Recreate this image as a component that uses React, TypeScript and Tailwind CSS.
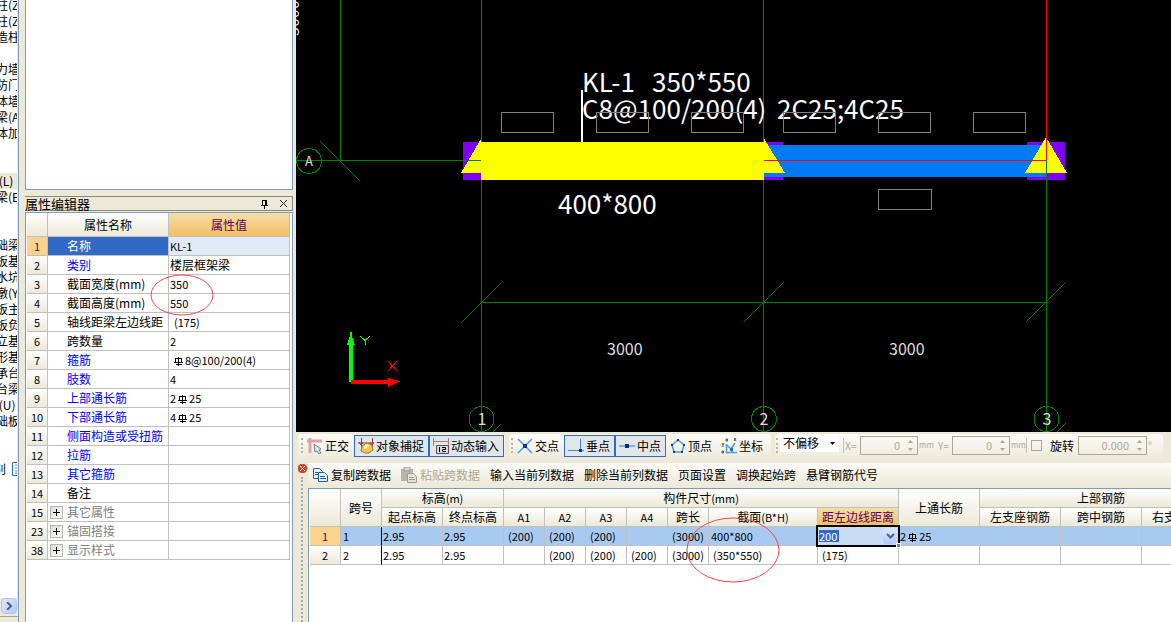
import type { ReactNode } from 'react'

interface Property {
  no: number
  name: string
  value?: ReactNode
  tone?: 'link' | 'group'
}

interface NumberBoxProps {
  label: string
  value: string
  wide?: boolean
}

// HRB rebar grade mark, stands between the count and the diameter
function Rebar() {
  return (
    <svg viewBox="0 0 9 9" className="mx-0.5 inline-block size-[9px] align-[-1px]" fill="none" stroke="currentColor" shapeRendering="crispEdges">
      <path d="M4.500 0v9M1 1.500h7M1.500 2v4M7.500 2v4M0 5.500h9M2 7.500h6" />
    </svg>
  )
}

const treeItems = [
  '柱(Z', '柱(Z', '造柱', '', '力墙', '防门', '体墙', '梁(A', '体加', '', '', ' (L)', '梁(E', '', '',
  '础梁', '板基', '水坑', '墩(Y', '板主', '板负', '立基', '形基', '承台', '台梁', ' (U)', '础板', '', '',
]

const properties: Property[] = [
  { no: 1, name: '名称', value: 'KL-1' },
  { no: 2, name: '类别', value: <span className="text-xs">楼层框架梁</span>, tone: 'link' },
  { no: 3, name: '截面宽度(mm)', value: '350' },
  { no: 4, name: '截面高度(mm)', value: '550' },
  { no: 5, name: '轴线距梁左边线距', value: <span className="pl-1">(175)</span> },
  { no: 6, name: '跨数量', value: '2' },
  { no: 7, name: '箍筋', value: <span className="pl-0.5"><Rebar />8@100/200(4)</span>, tone: 'link' },
  { no: 8, name: '肢数', value: '4', tone: 'link' },
  { no: 9, name: '上部通长筋', value: <>2<Rebar />25</>, tone: 'link' },
  { no: 10, name: '下部通长筋', value: <>4<Rebar />25</>, tone: 'link' },
  { no: 11, name: '侧面构造或受扭筋', tone: 'link' },
  { no: 12, name: '拉筋', tone: 'link' },
  { no: 13, name: '其它箍筋', tone: 'link' },
  { no: 14, name: '备注' },
  { no: 15, name: '其它属性', tone: 'group' },
  { no: 23, name: '锚固搭接', tone: 'group' },
  { no: 38, name: '显示样式', tone: 'group' },
]

const spanColumns = [
  'w-[31px]', 'w-[41px]', 'w-[61px]', 'w-[61px]', 'w-[41px]', 'w-[41px]', 'w-[41px]', 'w-[41px]',
  'w-[41px]', 'w-[109px]', 'w-[81px]', 'w-[81px]', 'w-[81px]', 'w-[81px]', 'w-[81px]',
]

const headCell = 'h-[19px] overflow-hidden whitespace-nowrap border-b border-r border-[#c0c0c0] bg-linear-to-b from-white to-[#ece9d8] p-0 text-center font-normal'
const bodyCell = 'h-[19px] whitespace-nowrap border-b border-r border-[#c0c0c0] p-0'

function TreeStrip() {
  return (
    <div className="flex w-[19px] shrink-0 flex-col overflow-hidden border-r border-[#7f9db9] bg-[#ece9d8]">
      <div className="mr-px flex-1 overflow-hidden bg-white">
        <ul className="-mt-[3px]">
          {treeItems.map((item, i) => (
            <li key={i} className={`h-4 whitespace-pre pl-0 leading-4 ${item === ' (L)' ? 'bg-[#ece9d8]' : ''}`}>
              <span className="-ml-1">{item}</span>
            </li>
          ))}
          <li className="flex h-4 items-center whitespace-pre leading-4">
            <span className="-ml-1.5 w-[18px] shrink-0">别</span>
            <svg viewBox="0 0 16 16" className="size-4 shrink-0">
              <path d="M.5 1.5h15v13H.5z" fill="#fff" stroke="#2a6ac8" />
              <path d="M3 4h9M3 7h9M3 10h9M3 12h9" stroke="#4aa0f0" />
            </svg>
          </li>
        </ul>
      </div>
      <button aria-label="向右滚动" className="mx-px flex h-4 w-4 items-center justify-center rounded-sm border border-[#b0c4f0] bg-linear-to-br from-[#e0e8ff] to-[#b4c8f6]">
        <svg viewBox="0 0 8 8" className="size-2">
          <path d="M2 0l4 4-4 4" fill="none" stroke="#4d6185" strokeWidth="2" />
        </svg>
      </button>
      <div className="mt-0.5 h-1.5 border-t border-[#aca899]" />
    </div>
  )
}

function PropertyEditor() {
  const nameColor = (p: Property) => {
    if (p.no === 1) return 'bg-[#316ac5] text-white'
    if (p.tone === 'link') return 'text-[#0000ff]'
    if (p.tone === 'group') return 'text-[#808080]'
    return ''
  }

  return (
    <section className="flex min-h-0 flex-1 flex-col">
      <div className="mt-1.5 mb-px flex h-[15px] items-center border border-l-0 border-[#8a887c]">
        <h2 className="flex-1 text-[13px] leading-none">属性编辑器</h2>
        <button aria-label="固定" className="mr-2.5">
          <svg viewBox="0 0 9 10" className="h-[10px] w-[9px]" fill="none" stroke="#000" shapeRendering="crispEdges">
            <path d="M2.5 6V1.5h4V6M5.5 1v5M1 6.500h7M4.500 6v4" />
          </svg>
        </button>
        <button aria-label="关闭" className="mr-1">
          <svg viewBox="0 0 9 9" className="size-[9px]" fill="none" stroke="#222">
            <path d="M1 1l7 7M8 1L1 8" />
          </svg>
        </button>
      </div>
      <div className="relative min-h-0 flex-1 overflow-hidden border border-b-0 border-[#7f9db9] bg-white pl-px">
        <table className="w-[263px] table-fixed border-separate border-spacing-0 leading-[18px]">
          <colgroup>
            <col className="w-[21px]" />
            <col className="w-[121px]" />
            <col className="w-[121px]" />
          </colgroup>
          <thead>
            <tr className="h-6">
              <th className={headCell} />
              <th className={headCell}>属性名称</th>
              <th className="border-b border-r border-[#c0c0c0] bg-linear-to-b from-[#f9dca8] to-[#f0bf62] p-0 font-normal text-[#580058]">属性值</th>
            </tr>
          </thead>
          <tbody>
            {properties.map(p => (
              <tr key={p.no}>
                <th scope="row" className={p.no === 1 ? `${bodyCell} bg-[#fcd38e] text-[11px] font-normal text-[#580058]` : `${headCell} text-[11px]`}>
                  {p.no}
                </th>
                <td className={`${bodyCell} ${nameColor(p)}`}>
                  <div className="flex h-[18px] items-center">
                    <span className="flex w-[19px] shrink-0 pl-0.5">
                      {p.tone === 'group' && (
                        <button aria-label={`展开${p.name}`} className="flex size-[13px] items-center justify-center border border-[#b8b8b0] bg-linear-to-br from-[#dcdcd4] to-white">
                          <svg viewBox="0 0 7 7" className="size-[7px]" stroke="#000" shapeRendering="crispEdges">
                            <path d="M0 3.5h7M3.5 0v7" />
                          </svg>
                        </button>
                      )}
                    </span>
                    {p.name}
                  </div>
                </td>
                <td className={`${bodyCell} pl-px text-[11px] ${p.no === 1 ? 'bg-[#e0eaf6]' : ''}`}>{p.value}</td>
              </tr>
            ))}
          </tbody>
        </table>
        <svg viewBox="0 0 64 42" className="pointer-events-none absolute left-[124px] top-[61px] h-[42px] w-16" fill="none">
          <ellipse cx="32" cy="21" rx="31" ry="20" stroke="#f04848" />
        </svg>
      </div>
    </section>
  )
}

function Drawing() {
  return (
    <div className="h-[432px] overflow-hidden bg-black">
      <svg viewBox="296 0 875 432" className="h-[432px] w-[875px]" fill="none" shapeRendering="crispEdges">
        {/* grid axes */}
        <g stroke="#008000">
          <path d="M340.5 0v160M296 160.5h168M320 141l40 40" />
          <path d="M481.5 180v252M763.5 180v252M1046.5 160v272" />
          <path d="M481 302.5h565M461 323l40-40M744 322l40-40M1026 322l40-40" />
          <circle cx="309" cy="161" r="12.5" />
          <circle cx="481.5" cy="419" r="12.5" />
          <circle cx="764" cy="419" r="12.5" />
          <circle cx="1046.5" cy="419" r="12.5" />
          <path d="M493 432l8-8M1057 432l9-9" />
        </g>

        {/* supports and the two spans */}
        <path d="M463 142h18v38h-18zM764 142h19v38h-19zM1027 142h38v38h-38z" fill="#8000f5" />
        <path d="M764 145h282v32H764z" fill="#007af5" />
        <path d="M481 142h283v38H481z" fill="#ff0" />
        <path d="M482 137l-21 36h22zM763 137l22 36h-22zM1046 137l-21 36h42z" fill="#ff0" />
        <path d="M463 160.500h18M1046.500 160v20" stroke="#008000" />
        <path d="M481.5 0v142M763.5 0v142M1046.5 0v160M764 160.5h282" stroke="#f00" />

        <path d="M582 90v52" stroke="#fff" strokeWidth="2" />
        <g fill="#fff" fontSize="26">
          <text x="582" y="92">KL-1 <tspan x="652">350*550</tspan></text>
          <text x="582" y="119">C8@100/200(4) <tspan x="777">2C25;4C25</tspan></text>
          <text x="558" y="214">400*800</text>
        </g>
        <g fill="#ddd" fontSize="16">
          <text x="607" y="355">3000</text>
          <text x="889" y="355">3000</text>
          <text x="0" y="0" transform="translate(299 36) rotate(-90)">3000</text>
          <text x="309" y="166" textAnchor="middle" fontSize="13">A</text>
          <text x="482" y="425" textAnchor="middle">1</text>
          <text x="764" y="425" textAnchor="middle">2</text>
          <text x="1047" y="425" textAnchor="middle">3</text>
        </g>
        <g stroke="#808080">
          {[501, 596, 691, 783, 878, 973].map(x => (
            <rect key={x} x={x + 0.5} y="112.5" width="52" height="20" />
          ))}
          <rect x="878.5" y="189.5" width="53" height="20" />
        </g>

        {/* coordinate marker */}
        <path d="M349 382v-37h-2l3-9v-4h2v4l3 9h-2v37z" fill="#0f0" />
        <path d="M360 336l5 4.500M370 336l-5 4.500V345" stroke="#0f0" />
        <path d="M351 380h37v-2l8 2 4 1v1l-4 1-8 4v-3h-37z" fill="#f00" />
        <path d="M388 361l9 10M397 361l-9 10" stroke="#f00" />
      </svg>
    </div>
  )
}

function Grip() {
  return <span className="h-[15px] shrink-0 border-l-2 border-dotted border-[#b8b5a6]" />
}

function SnapButton({ label, icon, pressed }: { label: string; icon: ReactNode; pressed?: boolean }) {
  return (
    <button
      aria-pressed={!!pressed}
      className={`flex h-[22px] shrink-0 items-center gap-0.5 whitespace-nowrap border pl-[3px] pr-1 ${
        pressed ? 'border-[#316ac5] bg-[#e1e6e8]' : 'border-transparent'
      }`}
    >
      <svg viewBox="0 0 16 16" className="size-4 shrink-0" fill="none">{icon}</svg>
      {label}
    </button>
  )
}

function NumberBox({ label, value, wide }: NumberBoxProps) {
  return (
    <div className={`flex h-[19px] shrink-0 border border-[#aca899] ${wide ? 'w-[69px]' : 'w-[58px]'}`}>
      <input aria-label={label} disabled defaultValue={value} className="min-w-0 flex-1 bg-transparent text-right text-[11px] text-[#aca899]" />
      <div className="flex w-[17px] flex-col items-center justify-around pl-1">
        <button aria-label={`${label} 增加`} disabled className="h-2 leading-none">
          <svg viewBox="0 0 5 3" className="h-[3px] w-[5px]"><path d="M0 3h5L2.500 0z" fill="#aca899" /></svg>
        </button>
        <button aria-label={`${label} 减少`} disabled className="h-2 leading-none">
          <svg viewBox="0 0 5 3" className="h-[3px] w-[5px]"><path d="M0 0h5L2.500 3z" fill="#aca899" /></svg>
        </button>
      </div>
    </div>
  )
}

const barStyle = 'flex h-[27px] shrink-0 items-center rounded bg-linear-to-b from-[#fcfbf8] via-[#f4f2e9] to-[#ece9d8] pb-1'

function SnapToolbar() {
  return (
    <div className="flex gap-1 overflow-hidden pl-0.5 pt-0.5">
      <div className={`${barStyle} w-[207px] pl-[3px]`}>
        <Grip />
        <SnapButton
          label="正交"
          icon={
            <>
              <path d="M0 3h15M3 0v15" stroke="#dfa3a6" strokeWidth="3" />
              <path d="M7 6l7 5-2 1 2 3-2 1-2-3-2 1z" fill="#dce6f2" stroke="#6f7f95" />
            </>
          }
        />
        <div className="flex">
          <SnapButton
            pressed
            label="对象捕捉"
            icon={
              <>
                <path d="M3.500 0v10M14.500 0v10M0 5h16M1 4l2 3 2-3M12 4l2 3 2-3" stroke="#8c3a48" />
                <path d="M4 8l5-3 5 2 1 5-4 3H7l-4-2z" fill="#ecc458" stroke="#a87a20" />
                <path d="M7 7l4 1M6 10l3-1" stroke="#fff3b8" strokeWidth="2" />
              </>
            }
          />
          <SnapButton
            pressed
            label="动态输入"
            icon={
              <>
                <path d="M.5 0v8M15.500 0v8M1 3.500h14" stroke="#b27780" />
                <path d="M3.500 7.500h12v8h-12z" fill="#d8d8dc" stroke="#505058" />
                <path d="M6.500 9v5M9 9.500h3.500v2H9.500v2H13" stroke="#000" />
              </>
            }
          />
        </div>
      </div>

      <div className={`${barStyle} w-[262px] pl-[2px]`}>
        <Grip />
        <SnapButton
          label="交点"
          icon={
            <>
              <path d="M1 1l14 14M15 1L1 15" stroke="#4a9ae8" strokeWidth="1.500" />
              <path d="M6 6h4v4H6z" fill="#0a3c8c" />
            </>
          }
        />
        <div className="flex">
          <SnapButton
            pressed
            label="垂点"
            icon={
              <>
                <path d="M0 12.500h16M12.500 1v11" stroke="#3f8ad8" />
                <path d="M11 11h3v3h-3z" fill="#0a3c8c" />
              </>
            }
          />
          <SnapButton
            pressed
            label="中点"
            icon={
              <>
                <path d="M0 8h16" stroke="#5a9ee0" strokeWidth="1.500" />
                <path d="M6 6h4v4H6z" fill="#0a2c7c" />
              </>
            }
          />
        </div>
        <SnapButton
          label="顶点"
          icon={
            <>
              <path d="M8 2l6 5-2 7H4L2 7z" stroke="#4a9ae8" strokeWidth="1.500" />
              <path d="M7 1h2v2H7zM13 6h2v2h-2zM11 13h2v2h-2zM3 13h2v2H3zM1 6h2v2H1z" fill="#14407c" />
            </>
          }
        />
        <SnapButton
          label="坐标"
          icon={
            <>
              <path d="M5.500 6v8.500H16M6 7l4 4 4-6M11 11v3" stroke="#4a9ae8" strokeWidth="1.500" />
              <path d="M1 5l1 2 1-2M2 7v2M13 0l2 3M15 0l-2 3" stroke="#333" strokeWidth=".8" />
              <path d="M5 1h1.500v2H5zM1 13h1.500v2H1z" stroke="#333" strokeWidth=".8" />
              <path d="M9 10h3v3H9z" fill="#2468b8" />
            </>
          }
        />
      </div>

      <div className={`${barStyle} w-[388px] pl-px text-[#aca899]`}>
        <span className="h-[15px] w-1 shrink-0 border-l-2 border-dotted border-[#b8b5a6]" />
        <div className="relative h-[18px] w-[59px] shrink-0 self-start bg-white text-black">
          <select aria-label="偏移方式" className="h-[18px] w-full appearance-none bg-transparent pl-[3px] leading-4">
            <option>不偏移</option>
          </select>
          <svg viewBox="0 0 5 3" className="pointer-events-none absolute right-1 top-2 h-[3px] w-[5px]">
            <path d="M0 0h5L2.500 3z" fill="#000" />
          </svg>
        </div>
        <span className="ml-1 mr-px h-[15px] w-px shrink-0 bg-[#c4c1b2]" />
        <span className="w-[15px] shrink-0 text-[10px]">X=</span>
        <NumberBox label="X" value="0" />
        <span className="w-[20px] shrink-0 pl-px text-[8px]">mm</span>
        <span className="w-[14px] shrink-0 text-[10px]">Y=</span>
        <NumberBox label="Y" value="0" />
        <span className="w-4 shrink-0 pl-px text-[8px]">mm</span>
        <span className="mr-1 h-[15px] w-px shrink-0 bg-[#c4c1b2]" />
        <label className="mr-1 flex shrink-0 items-center gap-2 text-black">
          <input type="checkbox" className="size-[11px] appearance-none border border-[#aca899]" />
          旋转
        </label>
        <NumberBox label="旋转角度" value="0.000" wide />
        <span className="pl-px text-[11px]">°</span>
      </div>
    </div>
  )
}

function SpanToolbar() {
  return (
    <div className="flex h-[25px] items-center gap-[10px] whitespace-nowrap bg-linear-to-b from-[#fcfbf8] to-[#ece9d8] pb-0.5 pl-1">
      <button className="flex items-center gap-[3px]">
        <svg viewBox="0 0 16 16" className="size-4" fill="#e4f0ff" stroke="#2860b4">
          <path d="M1.500 1.500h6l3 3v7h-9z" />
          <path d="M6.500 5.500h6l3 3v6h-9z" />
          <path d="M3 5.500h3M3 7.500h3M8 9.500h5M8 11.500h6" />
        </svg>
        复制跨数据
      </button>
      <button disabled className="flex items-center gap-[3px] text-[#aca899]">
        <svg viewBox="0 0 16 16" className="size-4">
          <path d="M0 2h12v12H0z" fill="#b8b5a8" />
          <path d="M3 0h6v4H3z" fill="#d8d5c8" stroke="#a09d90" />
          <path d="M6.500 6.500h6l3 3v6h-9z" fill="#e4e1d6" stroke="#a09d90" />
          <path d="M8 10.500h5M8 12.500h6" stroke="#a09d90" />
        </svg>
        粘贴跨数据
      </button>
      <button>输入当前列数据</button>
      <button>删除当前列数据</button>
      <button>页面设置</button>
      <button>调换起始跨</button>
      <button>悬臂钢筋代号</button>
    </div>
  )
}

function CellEditor() {
  return (
    <div className="absolute -left-0.5 -top-0.5 z-10 flex h-[22px] w-[84px] items-center justify-between border-2 border-black bg-[#c8dcf6]">
      <input aria-label="距左边线距离" defaultValue="200" className="ml-px h-3 w-[20px] bg-[#316ac5] text-[11px] leading-3 text-white" />
      <button aria-label="选择" className="flex h-4 w-[15px] items-center justify-center rounded-sm bg-linear-to-b from-[#dce6ff] to-[#b4c8f6]">
        <svg viewBox="0 0 9 6" className="h-1.5 w-[9px]">
          <path d="M1 1l3.500 3.500L8 1" fill="none" stroke="#4d6185" strokeWidth="2" />
        </svg>
      </button>
      <span className="absolute -bottom-[3px] -right-[3px] size-[5px] border border-white bg-[#808080]" />
    </div>
  )
}

function SpanTable() {
  const picked = `${bodyCell} bg-[#a8caf0]`

  return (
    <div className="relative min-h-0 flex-1 overflow-hidden border-l border-t border-[#7f9db9] bg-white pl-px">
      <table className="w-[913px] table-fixed border-separate border-spacing-0 leading-[18px]">
        <colgroup>
          {spanColumns.map((width, i) => <col key={i} className={width} />)}
        </colgroup>
        <thead>
          <tr>
            <th rowSpan={2} className={headCell} />
            <th rowSpan={2} className={headCell}>跨号</th>
            <th colSpan={2} className={headCell}>标高<span className="text-[11px]">(m)</span></th>
            <th colSpan={7} className={headCell}>构件尺寸<span className="text-[11px]">(mm)</span></th>
            <th rowSpan={2} className={headCell}>上通长筋</th>
            <th colSpan={3} className={headCell}>上部钢筋</th>
          </tr>
          <tr>
            <th className={headCell}>起点标高</th>
            <th className={headCell}>终点标高</th>
            {['A1', 'A2', 'A3', 'A4'].map(name => (
              <th key={name} className={`${headCell} text-[11px]`}>{name}</th>
            ))}
            <th className={headCell}>跨长</th>
            <th className={headCell}>截面<span className="text-[11px]">(B*H)</span></th>
            <th className="border-b border-r border-[#c0c0c0] bg-linear-to-b from-[#f9dca8] to-[#f0bf62] p-0 font-normal text-[#580058]">距左边线距离</th>
            <th className={headCell}>左支座钢筋</th>
            <th className={headCell}>跨中钢筋</th>
            <th className={headCell}>右支座钢筋</th>
          </tr>
        </thead>
        <tbody className="text-[11px]">
          <tr>
            <th scope="row" className={`${bodyCell} bg-[#fcd38e] font-normal text-[#580058]`}>1</th>
            <td className={`${picked} border-r-black pl-0.5`}>1</td>
            <td className={`${picked} pl-px`}>2.95</td>
            <td className={`${picked} pl-px`}>2.95</td>
            <td className={`${picked} pl-1`}>(200)</td>
            <td className={`${picked} pl-1`}>(200)</td>
            <td className={`${picked} pl-1`}>(200)</td>
            <td className={picked} />
            <td className={`${picked} pl-1`}>(3000)</td>
            <td className={`${picked} pl-0.5`}>400*800</td>
            <td className={`${picked} relative`}><CellEditor /></td>
            <td className={`${picked} pl-px`}>2<Rebar />25</td>
            <td className={picked} />
            <td className={picked} />
            <td className={picked} />
          </tr>
          <tr>
            <th scope="row" className={headCell}>2</th>
            <td className={`${bodyCell} border-r-black pl-0.5`}>2</td>
            <td className={`${bodyCell} pl-px`}>2.95</td>
            <td className={`${bodyCell} pl-px`}>2.95</td>
            <td className={bodyCell} />
            <td className={`${bodyCell} pl-1`}>(200)</td>
            <td className={`${bodyCell} pl-1`}>(200)</td>
            <td className={`${bodyCell} pl-1`}>(200)</td>
            <td className={`${bodyCell} pl-1`}>(3000)</td>
            <td className={`${bodyCell} pl-1`}>(350*550)</td>
            <td className={`${bodyCell} pl-1`}>(175)</td>
            <td className={bodyCell} />
            <td className={bodyCell} />
            <td className={bodyCell} />
            <td className={bodyCell} />
          </tr>
        </tbody>
      </table>
      <svg viewBox="0 0 94 66" className="pointer-events-none absolute left-[377px] top-[28px] z-20 h-[66px] w-[94px]" fill="none">
        <ellipse cx="47" cy="33" rx="46" ry="32" stroke="#f04848" />
      </svg>
    </div>
  )
}

export default function App() {
  return (
    <div className="flex h-screen overflow-hidden bg-[#ece9d8] font-['Noto_Sans_CJK_SC',sans-serif] text-xs text-black">
      <TreeStrip />
      <div className="ml-1.5 flex w-[268px] shrink-0 flex-col">
        <div className="h-[190px] shrink-0 border border-t-0 border-[#7f9db9] bg-white" />
        <PropertyEditor />
      </div>
      <main className="ml-[3px] flex min-w-0 flex-1 flex-col">
        <Drawing />
        <SnapToolbar />
        <div className="mt-0.5 flex min-h-0 flex-1">
          <div className="flex w-3 shrink-0 flex-col items-center">
            <button aria-label="关闭面板" className="mb-1 mt-px flex size-[9px] items-center justify-center rounded-sm bg-[#d8402a]">
              <svg viewBox="0 0 5 5" className="size-[5px]"><path d="M0 0l5 5M5 0L0 5" stroke="#fff" /></svg>
            </button>
            <span className="w-0 flex-1 border-l-2 border-dotted border-[#a8a698]" />
          </div>
          <div className="flex min-w-0 flex-1 flex-col">
            <SpanToolbar />
            <SpanTable />
          </div>
        </div>
      </main>
    </div>
  )
}
